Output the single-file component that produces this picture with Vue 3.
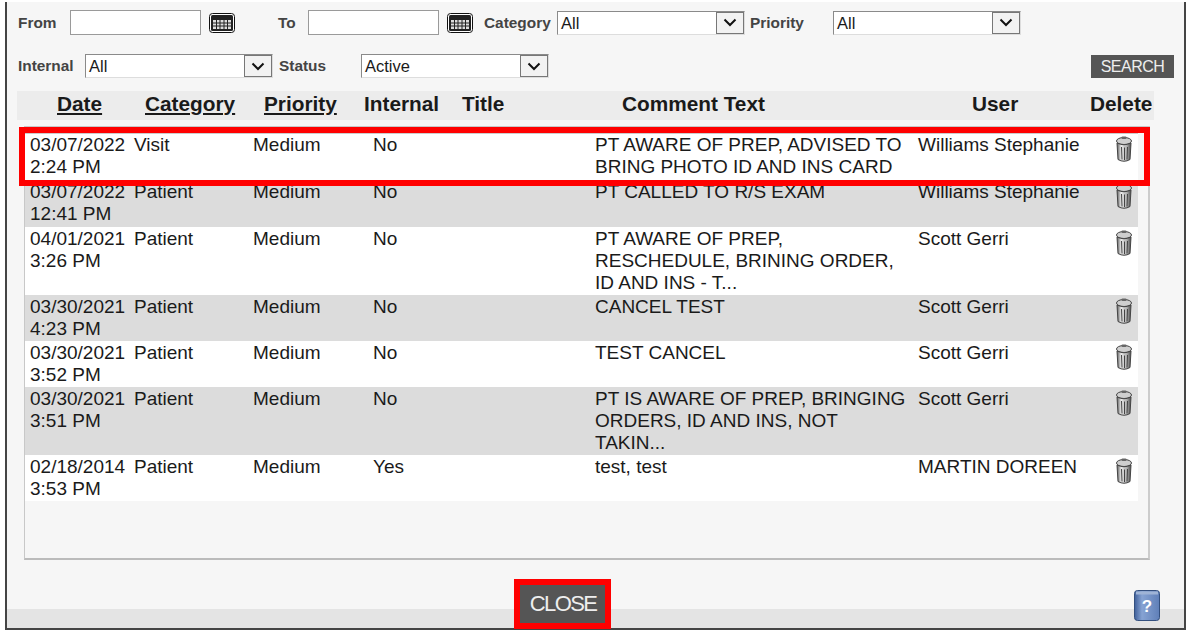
<script setup>
const rows = [
  { date: '03/07/2022', time: '2:24 PM', category: 'Visit', internal: 'No', comment: 'PT AWARE OF PREP, ADVISED TO BRING PHOTO ID AND INS CARD', user: 'Williams Stephanie' },
  { date: '03/07/2022', time: '12:41 PM', category: 'Patient', internal: 'No', comment: 'PT CALLED TO R/S EXAM', user: 'Williams Stephanie' },
  { date: '04/01/2021', time: '3:26 PM', category: 'Patient', internal: 'No', comment: 'PT AWARE OF PREP, RESCHEDULE, BRINING ORDER, ID AND INS - T...', user: 'Scott Gerri' },
  { date: '03/30/2021', time: '4:23 PM', category: 'Patient', internal: 'No', comment: 'CANCEL TEST', user: 'Scott Gerri' },
  { date: '03/30/2021', time: '3:52 PM', category: 'Patient', internal: 'No', comment: 'TEST CANCEL', user: 'Scott Gerri' },
  { date: '03/30/2021', time: '3:51 PM', category: 'Patient', internal: 'No', comment: 'PT IS AWARE OF PREP, BRINGING ORDERS, ID AND INS, NOT TAKIN...', user: 'Scott Gerri' },
  { date: '02/18/2014', time: '3:53 PM', category: 'Patient', internal: 'Yes', comment: 'test, test', user: 'MARTIN DOREEN' }
]
</script>

<template>
  <div class="page">
    <svg width="0" height="0" class="defs">
      <defs>
        <linearGradient id="can" x1="0" x2="1" y1="0" y2="0">
          <stop offset="0" stop-color="#5d5d5d" />
          <stop offset="0.3" stop-color="#ececec" />
          <stop offset="0.7" stop-color="#b0b0b0" />
          <stop offset="1" stop-color="#4a4a4a" />
        </linearGradient>
        <linearGradient id="book" x1="0" x2="1" y1="0" y2="0">
          <stop offset="0" stop-color="#3f5f9a" />
          <stop offset="0.3" stop-color="#86a3d3" />
          <stop offset="1" stop-color="#5f7fb8" />
        </linearGradient>
        <symbol id="trash" viewBox="0 0 18 27">
          <ellipse cx="9" cy="5" rx="7.5" ry="3.5" fill="#cfcfcf" stroke="#444" />
          <rect x="6.5" y="0.5" width="5" height="2.5" rx="1" fill="#666" />
          <path d="M2 7 L3 23.5 Q9 27 15 23.5 L16 7 Q9 10.5 2 7 Z" fill="url(#can)" stroke="#444" />
          <path d="M6.5 11 L7 23.5 M9.5 11.5 V24 M12.5 11 L12 23.5" stroke="#444" fill="none" />
        </symbol>
        <symbol id="cal" viewBox="0 0 26 20">
          <rect x="0.5" y="0.5" width="25" height="19" rx="3" fill="#fff" stroke="#111" />
          <rect x="2" y="2" width="22" height="16" rx="1.5" fill="#222" />
          <path d="M4 7 H22 V16 H4 Z" fill="#ddd" />
          <path d="M4 10 H22 M4 13 H22 M7.5 7 V16 M11 7 V16 M15 7 V16 M18.5 7 V16" stroke="#222" fill="none" />
        </symbol>
      </defs>
    </svg>

    <div class="dialog">
      <div class="filters first">
        <label class="lbl w-from">From</label>
        <input class="txt" />
        <svg class="cal"><use href="#cal" /></svg>
        <label class="lbl w-to">To</label>
        <input class="txt" />
        <svg class="cal"><use href="#cal" /></svg>
        <label class="lbl w-cat">Category</label>
        <div class="sel w-188">All<span class="arrow"><svg width="14" height="9" viewBox="0 0 14 9"><path d="M1.5 1.5 L7 7 L12.5 1.5" fill="none" stroke="#111" stroke-width="2" /></svg></span></div>
        <label class="lbl w-pri">Priority</label>
        <div class="sel w-188">All<span class="arrow"><svg width="14" height="9" viewBox="0 0 14 9"><path d="M1.5 1.5 L7 7 L12.5 1.5" fill="none" stroke="#111" stroke-width="2" /></svg></span></div>
      </div>

      <div class="filters second">
        <label class="lbl w-int">Internal</label>
        <div class="sel w-188">All<span class="arrow"><svg width="14" height="9" viewBox="0 0 14 9"><path d="M1.5 1.5 L7 7 L12.5 1.5" fill="none" stroke="#111" stroke-width="2" /></svg></span></div>
        <label class="lbl w-sta">Status</label>
        <div class="sel w-188">Active<span class="arrow"><svg width="14" height="9" viewBox="0 0 14 9"><path d="M1.5 1.5 L7 7 L12.5 1.5" fill="none" stroke="#111" stroke-width="2" /></svg></span></div>
        <button class="search">SEARCH</button>
      </div>

      <div class="head">
        <a>Date</a>
        <a>Category</a>
        <a>Priority</a>
        <span>Internal</span>
        <span>Title</span>
        <span>Comment Text</span>
        <span>User</span>
        <span>Delete</span>
      </div>

      <div class="panel">
        <div v-for="(r, i) in rows" :key="i" class="row" :class="{ alt: i % 2 === 1 }">
          <div class="nowrap">{{ r.date }}<br />{{ r.time }}</div>
          <div>{{ r.category }}</div>
          <div>Medium</div>
          <div>{{ r.internal }}</div>
          <div></div>
          <div class="cmt">{{ r.comment }}</div>
          <div class="nowrap">{{ r.user }}</div>
          <div><svg class="trash"><use href="#trash" /></svg></div>
        </div>
      </div>

      <div class="footer">
        <button class="close">CLOSE</button>
        <svg class="help" width="26" height="31" viewBox="0 0 26 31">
          <rect x="0.5" y="0.5" width="25" height="30" rx="3" fill="url(#book)" stroke="#34507f" />
          <rect x="2" y="1.5" width="22" height="3" fill="#9fb4d6" />
          <text x="13" y="22" text-anchor="middle" class="q">?</text>
        </svg>
      </div>

      <div class="mark row-mark"></div>
      <div class="mark close-mark"></div>
    </div>
  </div>
</template>

<style scoped>
.page {
  width: 1192px;
  height: 636px;
  overflow: hidden;
  background: #fff;
  padding: 2px 6px 0 5px;
  box-sizing: border-box;
  font-family: "Liberation Sans", Arial, sans-serif;
  color: #1a1a1a;
}

.defs {
  position: absolute;
}

.dialog {
  position: relative;
  width: 1181px;
  height: 628px;
  box-sizing: border-box;
  background: #f6f6f6;
  border-left: 2px solid #444;
  border-right: 2px solid #444;
  border-bottom: 2px solid #444;
}

.filters {
  display: flex;
  align-items: center;
  padding-left: 11px;
}

.first {
  height: 40px;
  padding-top: 1px;
  box-sizing: border-box;
}

.second {
  height: 40px;
  margin-top: 4px;
}

.lbl {
  font-size: 15.4px;
  font-weight: bold;
  color: #444;
  white-space: nowrap;
}

.w-from { width: 52px; }
.w-to { width: 30px; margin-left: 43px; }
.w-cat { width: 73px; margin-left: 11px; }
.w-pri { width: 83px; margin-left: 5px; }
.w-int { width: 67px; }
.w-sta { width: 82px; margin-left: 6px; }

.txt {
  width: 131px;
  height: 25px;
  box-sizing: border-box;
  background: #fff;
  border: 1px solid #9a9a9a;
  padding: 0;
}

.cal {
  width: 26px;
  height: 20px;
  margin-left: 8px;
}

.sel {
  position: relative;
  height: 24px;
  line-height: 22px;
  box-sizing: border-box;
  background: #fff;
  border: 1px solid #8a8a8a;
  border-bottom-color: #ddd;
  border-right-color: #ddd;
  padding-left: 3px;
  font-size: 16.5px;
}

.w-188 { width: 188px; }

.arrow {
  position: absolute;
  top: 0;
  right: 0;
  width: 28px;
  height: 22px;
  box-sizing: border-box;
  background: #f2f2f2;
  border: 1px solid #777;
  display: flex;
  align-items: center;
  justify-content: center;
}

.search {
  margin-left: auto;
  margin-right: 10px;
  width: 83px;
  height: 23px;
  padding: 1px 0 0;
  border: 0;
  background: #555;
  color: #eee;
  font-family: inherit;
  font-size: 16px;
  letter-spacing: -0.5px;
}

.head {
  display: grid;
  grid-template-columns: 88px 119px 100px 98px 160px 350px 118px 1fr;
  height: 29px;
  margin-top: 5px;
  margin-left: 10px;
  margin-right: 30px;
  padding-left: 40px;
  line-height: 26px;
  background: #ececec;
  font-size: 20.8px;
  font-weight: bold;
  white-space: nowrap;
}

.head a {
  text-decoration: underline;
}

.panel {
  width: 1126px;
  height: 434px;
  box-sizing: border-box;
  margin: 6px 0 0 17px;
  padding: 6px 10px 0 0;
  border: 1px solid #c8c8c8;
  border-bottom: 2px solid #bbb;
  border-right: 2px solid #ccc;
}

.row {
  display: grid;
  grid-template-columns: 104px 119px 120px 97px 125px 323px 197px 1fr;
  padding: 0 0 2px 5px;
  background: #fff;
  font-size: 19px;
  line-height: 22px;
}

.row:nth-child(n+3) {
  padding-top: 1px;
  padding-bottom: 1px;
}

.cmt {
  padding-right: 9px;
}

.nowrap {
  white-space: nowrap;
}

.row:first-child {
  border-top: 1px solid #ccc;
  border-bottom: 1px solid #ccc;
}

.alt {
  background: #dcdcdc;
}

.trash {
  display: block;
  width: 18px;
  height: 27px;
  margin-top: 2px;
}

.footer {
  position: relative;
  height: 68px;
  background: linear-gradient(#f6f6f6 49px, #e4e4e4 49px);
}

.close {
  position: absolute;
  left: 513px;
  top: 23px;
  width: 86px;
  height: 41px;
  padding: 0;
  border: 0;
  background: #555;
  color: #eee;
  font-family: inherit;
  font-size: 22px;
  letter-spacing: -1.6px;
}

.help {
  position: absolute;
  left: 1127px;
  top: 30px;
}

.q {
  fill: #fff;
  font-size: 17px;
  font-weight: bold;
}

.mark {
  position: absolute;
  box-sizing: border-box;
  border: 6px solid #f00;
}

.row-mark {
  left: 12px;
  top: 125px;
  width: 1131px;
  height: 59px;
}

.close-mark {
  left: 507px;
  top: 577px;
  width: 97px;
  height: 50px;
}
</style>

<style>
body {
  margin: 0;
}
</style>
